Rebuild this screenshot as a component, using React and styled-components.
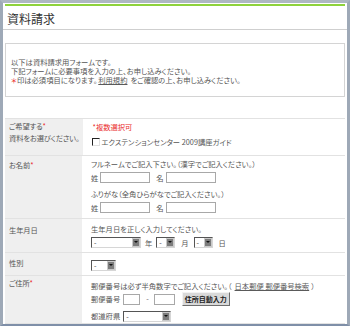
import React from "react"
import styled, { createGlobalStyle } from "styled-components"

const GlobalStyle = createGlobalStyle`
  html, body {
    margin: 0;
    padding: 0;
    background: #fff;
  }
  body {
    font-family: "Noto Sans CJK JP", "DejaVu Sans", sans-serif;
    font-feature-settings: "palt";
    color: #505050;
  }
`

const Frame = styled.div`
  width: 350px;
  height: 326px;
  box-sizing: border-box;
  border-style: solid;
  border-color: #aeb7c2 #9ea9b7 #7f8fa8 #9ea9b7;
  border-width: 3px 3px 2px 3px;
  background: #fff;
  overflow: hidden;
`

const GreenBar = styled.div`
  height: 2px;
  margin: 1px 2px 0;
  background: #8ed23c;
`

const Title = styled.h1`
  margin: 0;
  padding: 7px 4px 4px;
  font-size: 12px;
  line-height: 12px;
  font-weight: normal;
  color: #333;
  border-bottom: 1px solid #cfcfcf;
`

const InfoBox = styled.div`
  margin: 13px 2px 0;
  padding: 14px 5px 11px;
  border: 1px solid #d4d4d4;
  font-size: 7.3px;
  line-height: 9px;
  color: #555;
`

const Red = styled.span`
  color: #ea2a2a;
`

const TextLink = styled.a`
  color: #5a5a5a;
  text-decoration: underline;
  margin: ${(p) => p.$space || "0"};
`

const Table = styled.div`
  margin: 21px 2px 0;
  border-top: 1px solid #e2e2e2;
  font-size: 7.3px;
`

const Row = styled.div`
  display: flex;
  min-height: ${(p) => p.$h}px;
  border-bottom: 1px solid #e2e2e2;
`

const Label = styled.div`
  flex: 0 0 77px;
  box-sizing: border-box;
  padding: ${(p) => p.$pad || "3px"} 4px 0;
  background: #efefef;
  line-height: 12px;
  letter-spacing: -0.15px;
  white-space: nowrap;
  color: #555;
`

const Field = styled.div`
  flex: 1;
  padding: 2px 9px 0;
  color: #555;
`

const Line = styled.div`
  display: flex;
  align-items: center;
  height: ${(p) => p.$h || 12}px;
  margin-top: ${(p) => p.$mt || 0}px;
  white-space: nowrap;
`

const Gap = styled.span`
  margin: 0 ${(p) => p.$r || 0}px 0 ${(p) => p.$l || 0}px;
`

const Check = styled.span`
  display: inline-block;
  width: 6px;
  height: 6px;
  margin-right: 1px;
  border-style: solid;
  border-width: 1px;
  border-color: #222 #e0e0e0 #e0e0e0 #222;
  background: #fff;
`

const TextBox = styled.span`
  display: inline-block;
  box-sizing: border-box;
  width: ${(p) => p.$w}px;
  height: 11px;
  border: 1px solid #a8a8a8;
  background: #fff;
`

const SelectBox = styled.span`
  display: inline-flex;
  align-items: stretch;
  box-sizing: border-box;
  width: ${(p) => p.$w}px;
  height: 11px;
  border-style: solid;
  border-width: 1px;
  border-color: #555 #d6d6d6 #d6d6d6 #555;
  background: #fff;
`

const SelectText = styled.span`
  flex: 1;
  padding-left: 2px;
  font-size: 7px;
  line-height: 8px;
  color: #333;
`

const Arrow = styled.span`
  position: relative;
  width: 8px;
  background: #7c7c7c;
  border: 1px solid #c9c9c9;
  box-sizing: border-box;

  &::after {
    content: "";
    position: absolute;
    left: 1px;
    top: 2px;
    border-left: 2px solid transparent;
    border-right: 2px solid transparent;
    border-top: 2px solid #111;
  }
`

const AutoButton = styled.span`
  display: inline-flex;
  align-items: center;
  justify-content: center;
  box-sizing: border-box;
  width: 48px;
  height: 14px;
  margin-left: 7px;
  border-style: solid;
  border-width: 1px;
  border-color: #f2f2f2 #6e6e6e #6e6e6e #f2f2f2;
  background: #d9d9d9;
  font-size: 7px;
  font-weight: bold;
  color: #222;
`

const Select = ({ w, text = "-" }) => (
  <SelectBox $w={w}>
    <SelectText>{text}</SelectText>
    <Arrow />
  </SelectBox>
)

export default function App() {
  return (
    <>
      <GlobalStyle />
      <Frame>
        <GreenBar />
        <Title>資料請求</Title>
        <InfoBox>
          <div>以下は資料請求用フォームです。</div>
          <div>下記フォームに必要事項を入力の上、お申し込みください。</div>
          <div>
            <Red>＊</Red>印は必須項目になります。
            <TextLink $space="0 3px 0 1px">利用規約</TextLink>
            をご確認の上、お申し込みください。
          </div>
        </InfoBox>

        <Table>
          <Row $h={36}>
            <Label $pad="1px">
              <div>
                ご希望する<Red>*</Red>
              </div>
              <div>資料をお選びください。</div>
            </Label>
            <Field>
              <Line>
                <Red>*複数選択可</Red>
              </Line>
              <Line $mt={3}>
                <Check />
                エクステンションセンター 2009講座ガイド
              </Line>
            </Field>
          </Row>

          <Row $h={62}>
            <Label>
              お名前<Red>*</Red>
            </Label>
            <Field>
              <Line>フルネームでご記入下さい。（漢字でご記入ください。）</Line>
              <Line $h={15}>
                <Gap $r={2}>姓</Gap>
                <TextBox $w={50} />
                <Gap $l={6} $r={2}>名</Gap>
                <TextBox $w={50} />
              </Line>
              <Line $mt={3}>ふりがな（全角ひらがなでご記入ください。）</Line>
              <Line $h={15}>
                <Gap $r={2}>姓</Gap>
                <TextBox $w={50} />
                <Gap $l={6} $r={2}>名</Gap>
                <TextBox $w={50} />
              </Line>
            </Field>
          </Row>

          <Row $h={33}>
            <Label $pad="5px">生年月日</Label>
            <Field>
              <Line $mt={2}>生年月日を正しく入力してください。</Line>
              <Line $h={15}>
                <Select w={50} />
                <Gap $l={4} $r={4}>年</Gap>
                <Select w={19} />
                <Gap $l={6} $r={5}>月</Gap>
                <Select w={19} />
                <Gap $l={6}>日</Gap>
              </Line>
            </Field>
          </Row>

          <Row $h={22}>
            <Label $pad="4px">性別</Label>
            <Field>
              <Line $h={16} $mt={2}>
                <Select w={25} />
              </Line>
            </Field>
          </Row>

          <Row $h={46}>
            <Label $pad="1px">
              ご住所<Red>*</Red>
            </Label>
            <Field>
              <Line $mt={2}>
                郵便番号は必ず半角数字でご記入ください。（
                <TextLink $space="0 2px 0 3px">日本郵便 郵便番号検索</TextLink>）
              </Line>
              <Line $h={14}>
                <Gap $r={3}>郵便番号</Gap>
                <TextBox $w={17} />
                <Gap $l={6} $r={5}>-</Gap>
                <TextBox $w={21} />
                <AutoButton>住所自動入力</AutoButton>
              </Line>
              <Line $h={14} $mt={3}>
                <Gap $r={3}>都道府県</Gap>
                <Select w={48} />
              </Line>
            </Field>
          </Row>
        </Table>
      </Frame>
    </>
  )
}
